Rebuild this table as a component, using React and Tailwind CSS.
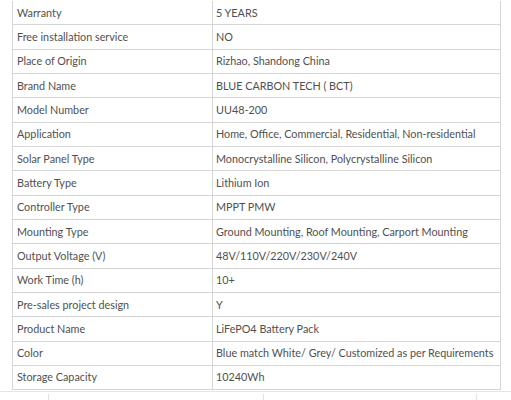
const specs = [
  ['Warranty', '5 YEARS'],
  ['Free installation service', 'NO'],
  ['Place of Origin', 'Rizhao, Shandong China'],
  ['Brand Name', 'BLUE CARBON TECH ( BCT)'],
  ['Model Number', 'UU48-200'],
  ['Application', 'Home, Office, Commercial, Residential, Non-residential'],
  ['Solar Panel Type', 'Monocrystalline Silicon, Polycrystalline Silicon'],
  ['Battery Type', 'Lithium Ion'],
  ['Controller Type', 'MPPT PMW'],
  ['Mounting Type', 'Ground Mounting, Roof Mounting, Carport Mounting'],
  ['Output Voltage (V)', '48V/110V/220V/230V/240V'],
  ['Work Time (h)', '10+'],
  ['Pre-sales project design', 'Y'],
  ['Product Name', 'LiFePO4 Battery Pack'],
  ['Color', 'Blue match White/ Grey/ Customized as per Requirements'],
  ['Storage Capacity', '10240Wh'],
];

export default function App() {
  return (
    <div className="w-[511px] h-[400px] overflow-hidden bg-white font-['Lato','Liberation_Sans',sans-serif] text-[10.8px] text-[#505050]">
      <div className="pt-[1px]">
        <div className="ml-[12px] w-[489px] border-l border-r border-[#d6d6d6]">
          {specs.map(([label, value]) => (
            <div key={label} className="flex h-[24.33px] items-center border-b border-[#d6d6d6]">
              <div className="w-[200px] shrink-0 h-full flex items-center pl-[4px] border-r border-[#d6d6d6]">{label}</div>
              <div className="flex-1 min-w-0 h-full flex items-center pl-[3px] whitespace-nowrap overflow-hidden">{value}</div>
            </div>
          ))}
        </div>
      </div>
      <div className="mt-[1px] h-px bg-[#e6e6e6]" />
      {/* next table peeking in at the bottom */}
      <div className="mt-[2px] flex h-[10px]">
        <div className="ml-[48px] w-[215px] border-l border-[#e0e0e0]" />
        <div className="w-[214px] border-l border-r border-[#e0e0e0]" />
      </div>
    </div>
  );
}
